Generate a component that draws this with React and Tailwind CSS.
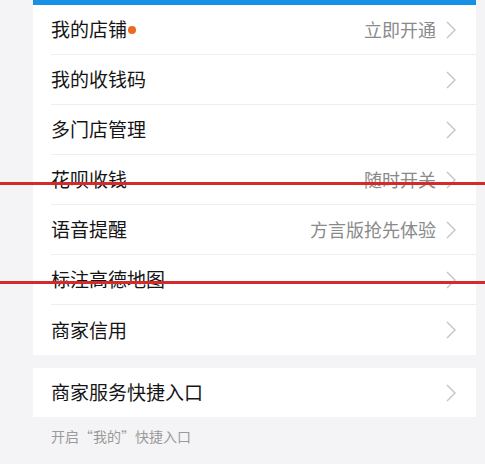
import React from 'react';

const rows = [
  { title: '我的店铺', dot: true, extra: '立即开通' },
  { title: '我的收钱码' },
  { title: '多门店管理' },
  { title: '花呗收钱', extra: '随时开关' },
  { title: '语音提醒', extra: '方言版抢先体验' },
  { title: '标注高德地图' },
  { title: '商家信用' },
];

function Chevron() {
  return (
    <svg width="12" height="20" viewBox="0 0 12 20" className="ml-[9px] shrink-0">
      <path d="M2 2 L10 10 L2 18" fill="none" stroke="#c4c4c8" strokeWidth="1.4" />
    </svg>
  );
}

function Row({ title, dot, extra, last, h = 'h-[50px]' }) {
  return (
    <div className="pl-[18px]">
      <div
        className={
          'flex items-center pr-[19px] ' + h + ' ' + (last ? '' : 'border-b border-[#eeeeee]')
        }
      >
        <span className="text-[19px] text-[#151515]">{title}</span>
        {dot && <span className="ml-[1px] h-[8px] w-[8px] rounded-full bg-[#ee6a1c]" />}
        <span className="ml-auto text-[18px] text-[#8a8a8a]">{extra}</span>
        <Chevron />
      </div>
    </div>
  );
}

export default function App() {
  return (
    <div
      className="relative h-[464px] w-[485px] overflow-hidden bg-[#f4f4f6] pl-[33px] pr-[9px]"
      style={{ fontFamily: '"Noto Sans CJK SC", "Noto Sans", sans-serif' }}
    >
      <div className="bg-white">
        <div className="h-[5px] bg-[#1890e6]" />
        {rows.map((r, i) => (
          <Row key={r.title} {...r} last={i === rows.length - 1} />
        ))}
      </div>
      <div className="mt-[13px] bg-white">
        <Row title="商家服务快捷入口" last h="h-[49px]" />
      </div>
      <div className="pl-[18px] pt-[9px] text-[14px] text-[#9a9a9a]">开启“我的”快捷入口</div>

      <div className="absolute left-0 top-[182px] h-[3px] w-full bg-[#d42a2a]" />
      <div className="absolute left-0 top-[281px] h-[3px] w-full bg-[#d42a2a]" />
    </div>
  );
}
